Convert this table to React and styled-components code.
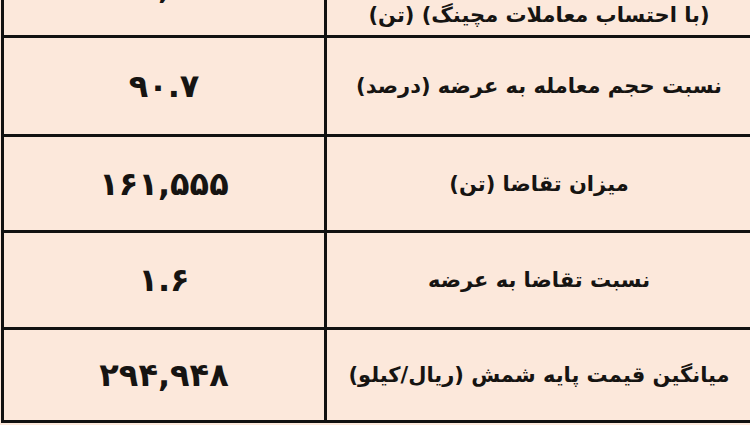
import React from "react";
import styled, { createGlobalStyle } from "styled-components";

const GlobalStyle = createGlobalStyle`
  html, body {
    margin: 0;
    padding: 0;
    background: #fce8db;
    overflow: hidden;
  }
  body {
    width: 750px;
    height: 425px;
  }
`;

const rows = [
  { label: ["حجم معامله", "(با احتساب معاملات مچینگ) (تن)"], value: "۱۴۶,۰۸۲", h: 96, end: true },
  { label: ["نسبت حجم معامله به عرضه (درصد)"], value: "۹۰.۷", h: 96 },
  { label: ["میزان تقاضا (تن)"], value: "۱۶۱,۵۵۵", h: 93 },
  { label: ["نسبت تقاضا به عرضه"], value: "۱.۶", h: 94 },
  { label: ["میانگین قیمت پایه شمش (ریال/کیلو)"], value: "۲۹۴,۹۴۸", h: 90 },
];

const App = () => {
  return (
    <>
      <GlobalStyle />
      <Table>
        {rows.map((r, i) => (
          <Row key={i} $h={r.h}>
            <Label $end={r.end}>
              {r.label.map((l) => (
                <Line key={l}>{l}</Line>
              ))}
            </Label>
            <Value>{r.value}</Value>
          </Row>
        ))}
      </Table>
    </>
  );
};

const Table = styled.div`
  direction: rtl;
  width: 747px;
  margin-top: -61px;
  margin-left: 1px;
  border-left: 3px solid #111;
  background: #fce8db;
  font-family: "DejaVu Sans", sans-serif;
  font-weight: 700;
  color: #161412;
`;

const Row = styled.div`
  display: grid;
  grid-template-columns: 1fr 320px;
  height: ${(p) => p.$h}px;
  border-bottom: 3px solid #111;
`;

const Label = styled.div`
  display: flex;
  flex-direction: column;
  align-items: center;
  justify-content: ${(p) => (p.$end ? "flex-end" : "center")};
  padding-bottom: ${(p) => (p.$end ? "3px" : "0")};
  border-left: 3px solid #111;
  font-size: 21px;
  line-height: 34px;
  text-align: center;
`;

const Line = styled.div`
  white-space: nowrap;
`;

const Value = styled.div`
  display: flex;
  align-items: center;
  justify-content: center;
  font-size: 32px;
  letter-spacing: 1px;
`;

export default App;
